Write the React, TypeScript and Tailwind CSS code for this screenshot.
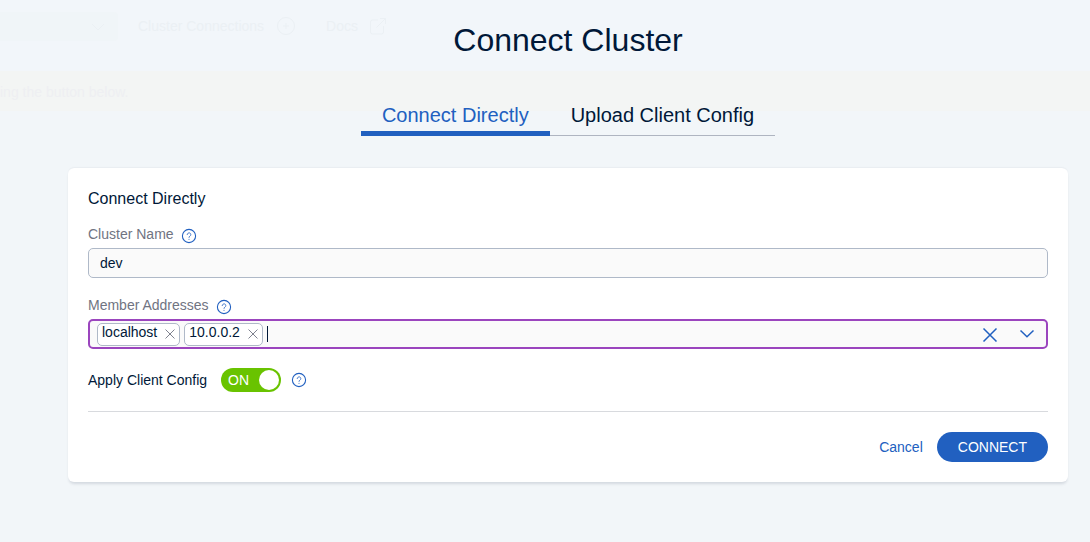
import { useState } from 'react';

function HelpIcon() {
  return (
    <svg viewBox="0 0 16 16" className="h-4 w-4 shrink-0" fill="none" stroke="#2160c0" strokeWidth="1.1" strokeLinecap="round" aria-hidden="true">
      <circle cx="8" cy="8" r="6.6" />
      <path d="M6.2 6.600a1.800 1.800 0 1 1 2.800 1.500c-.7.4-1 .7-1 1.300" strokeWidth="0.8" />
      <path d="M8 11.300v.2" strokeWidth="0.8" />
    </svg>
  );
}

function HelpButton({ label }: { label: string }) {
  return (
    <button type="button" aria-label={label} className="shrink-0">
      <HelpIcon />
    </button>
  );
}

function Tag({ text, onRemove }: { text: string; onRemove: () => void }) {
  return (
    <span className="flex h-[23px] items-center gap-[7px] rounded-[5px] border border-[#afb9c8] bg-white pr-[3px] pl-1">
      <span className="mb-1 leading-4">{text}</span>
      <button type="button" aria-label={`Remove ${text}`} onClick={onRemove}>
        <svg viewBox="0 0 12 12" className="h-3 w-3" stroke="#707482" strokeWidth="0.9" aria-hidden="true">
          <path d="M1.5 1.5l9 9M10.5 1.5l-9 9" />
        </svg>
      </button>
    </span>
  );
}

function Backdrop() {
  return (
    <div className="pointer-events-none absolute inset-x-0 top-0 -z-10 overflow-hidden text-sm" aria-hidden="true">
      <div className="flex h-[71px] items-start bg-[#f2f6fa] pt-3 text-[#ebf0f4]">
        <div className="flex h-[29px] w-[118px] items-center justify-end rounded-r bg-[#f0f5f8] pr-3">
          <svg viewBox="0 0 16 16" className="h-4 w-4" fill="none" stroke="currentColor">
            <path d="M2 5l6 6 6-6" />
          </svg>
        </div>
        <div className="ml-5 flex h-7 items-center gap-3">
          <span>Cluster Connections</span>
          <svg viewBox="0 0 20 20" className="h-5 w-5" fill="none" stroke="currentColor">
            <circle cx="10" cy="10" r="8.5" />
            <path d="M10 7v6M7 10h6" />
          </svg>
        </div>
        <div className="ml-[30px] flex h-7 items-center gap-[10px]">
          <span>Docs</span>
          <svg viewBox="0 0 20 20" className="h-5 w-5" fill="none" stroke="currentColor">
            <path d="M10 4H4.500a2 2 0 0 0-2 2v10a2 2 0 0 0 2 2h9a2 2 0 0 0 2-2v-6M8.500 11.500l9-9M12 2.500h5.500v5.500" />
          </svg>
        </div>
      </div>
      <div className="h-10 bg-[#f3f5f4] pt-[11px] leading-5 text-[#eeeff2]">ing the button below.</div>
    </div>
  );
}

const tabs = ['Connect Directly', 'Upload Client Config'];

export default function App() {
  const [tab, setTab] = useState(0);
  const [members, setMembers] = useState(['localhost', '10.0.0.2']);
  const [enabled, setEnabled] = useState(true);

  return (
    <div className="relative isolate min-h-screen bg-[#f2f6f9] pt-5 pr-[22px] pb-10 pl-[68px] font-['Liberation_Sans',Arial,sans-serif] text-sm text-[#001838]">
      <Backdrop />
      <main className="mx-auto flex max-w-[1000px] flex-col">
        <h1 className="text-center text-[32px] leading-10">Connect Cluster</h1>

        <div role="tablist" className="mt-10 flex self-center text-xl">
          {tabs.map((name, i) => (
            <button
              key={name}
              type="button"
              role="tab"
              aria-selected={tab === i}
              onClick={() => setTab(i)}
              className={
                'flex h-9 items-start px-[21px] leading-[30px] ' +
                (tab === i ? 'border-b-5 border-[#2160c0] text-[#2160c0]' : 'border-b border-[#afb5c1]')
              }
            >
              {name}
            </button>
          ))}
        </div>

        <form
          onSubmit={(e) => e.preventDefault()}
          className="mt-8 rounded-md bg-white p-5 shadow-[0_3px_3px_-1px_rgba(0,24,56,0.13),0_-1px_2px_-1px_rgba(0,24,56,0.12)]"
        >
          <h2 className="text-base leading-[22px]">Connect Directly</h2>

          <div className="mt-[13px]">
            <div className="flex h-[21px] items-end gap-[7px] text-[#707482]">
              <label htmlFor="cluster-name" className="leading-5">Cluster Name</label>
              <HelpButton label="About cluster name" />
            </div>
            <input
              id="cluster-name"
              defaultValue="dev"
              className="mt-1 block h-[30px] w-full rounded-[5px] border border-[#afb9c8] bg-[#fafafa] px-[11px] outline-none"
            />
          </div>

          <div className="mt-4">
            <div className="flex h-[21px] items-end gap-[7px] text-[#707482]">
              <label htmlFor="members" className="leading-5">Member Addresses</label>
              <HelpButton label="About member addresses" />
            </div>
            <div className="mt-1 flex h-[30px] items-center gap-1 rounded-[5px] border-2 border-[#9b45be] bg-[#fafafa] pr-[11px] pl-[7px]">
              {members.map((m) => (
                <Tag key={m} text={m} onRemove={() => setMembers(members.filter((x) => x !== m))} />
              ))}
              <span className="h-4 w-px bg-[#001838]" />
              <input id="members" className="min-w-0 flex-1 bg-transparent caret-transparent outline-none" />
              <button type="button" aria-label="Clear all" onClick={() => setMembers([])} className="mr-[17px]">
                <svg viewBox="0 0 16 16" className="h-4 w-4" stroke="#2160c0" strokeWidth="1.5" aria-hidden="true">
                  <path d="M1.5 2.500l13 13M14.500 2.500l-13 13" />
                </svg>
              </button>
              <button type="button" aria-label="Show options">
                <svg viewBox="0 0 16 16" className="h-4 w-4" fill="none" stroke="#2160c0" strokeWidth="1.5" aria-hidden="true">
                  <path d="M1.5 4.500l6.500 6.300L14.500 4.500" />
                </svg>
              </button>
            </div>
          </div>

          <div className="mt-[19px] flex h-6 items-center gap-[10px]">
            <label htmlFor="apply">Apply Client Config</label>
            <label className="relative ml-1 flex h-6 w-[60px] cursor-pointer items-center rounded-full bg-[#8b93a1] px-[7px] text-white has-checked:bg-[#69c300]">
              <input
                id="apply"
                type="checkbox"
                role="switch"
                checked={enabled}
                onChange={(e) => setEnabled(e.target.checked)}
                className="peer sr-only"
              />
              <span className="hidden peer-checked:inline">ON</span>
              <span className="ml-auto peer-checked:hidden">OFF</span>
              <span className="absolute top-0.5 left-0.5 h-5 w-5 rounded-full bg-white peer-checked:left-[38px]" />
            </label>
            <HelpButton label="About client config" />
          </div>

          <div className="mt-[19px] flex items-center justify-end gap-[14px] border-t border-[#d8dade] pt-5">
            <button type="button" className="h-[30px] text-[#2160c0]">Cancel</button>
            <button type="submit" className="h-[30px] rounded-full bg-[#2160c0] px-[21px] text-white">CONNECT</button>
          </div>
        </form>
      </main>
    </div>
  );
}
